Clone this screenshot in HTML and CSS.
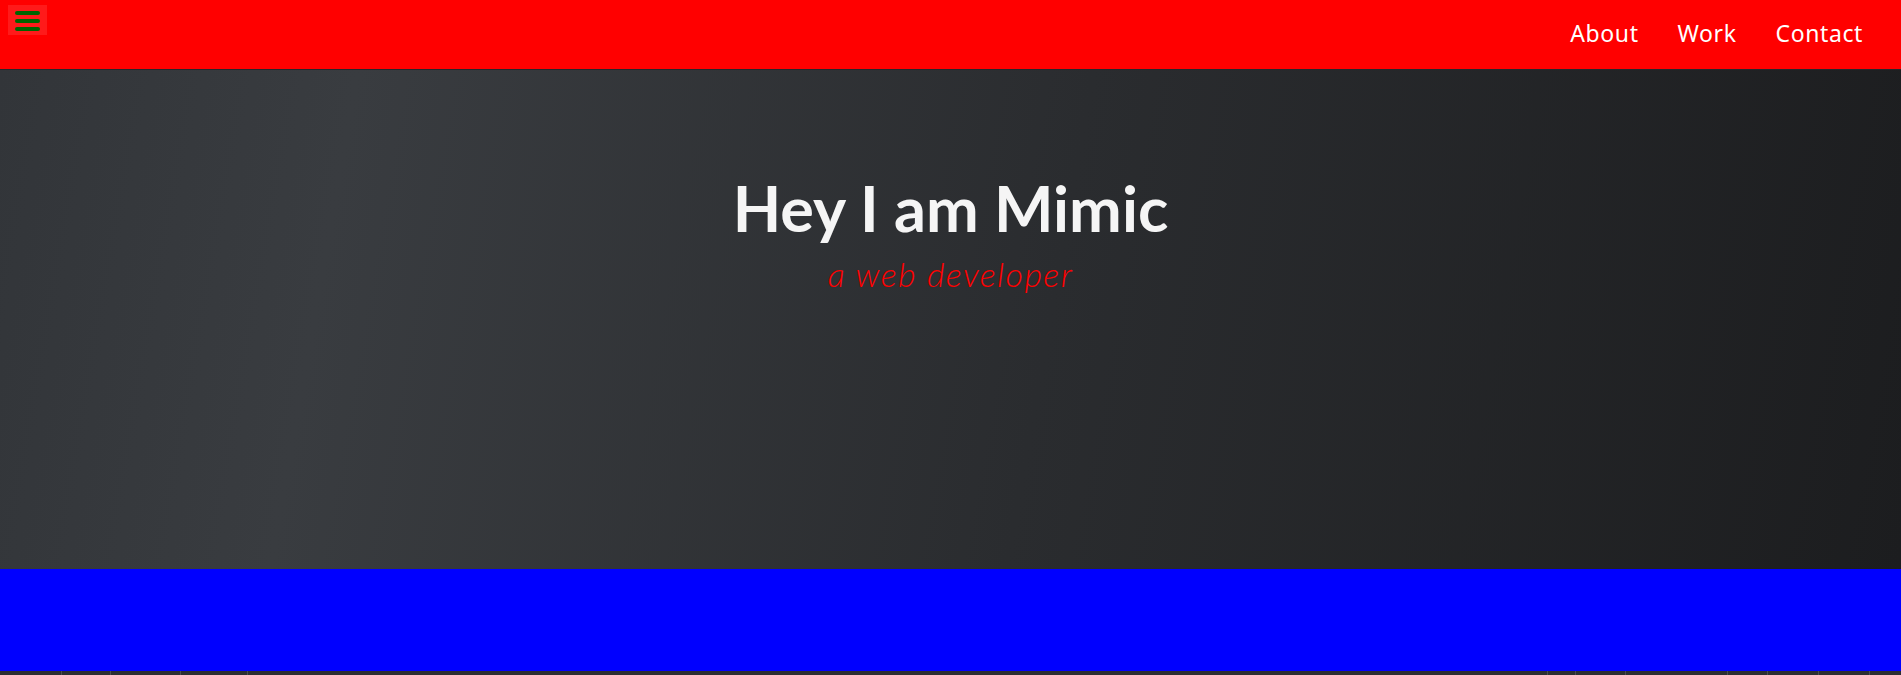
FILE: index.html
```html
<!DOCTYPE html>
<html lang="en">
<head>
<meta charset="utf-8">
<title>Mimic</title>
<link rel="stylesheet" href="styles.css">
</head>
<body>
<header class="topbar">
  <button class="menu-btn" aria-label="Menu">
    <span class="bar"></span><span class="bar"></span><span class="bar"></span>
  </button>
  <nav class="nav">
    <a href="#">About</a>
    <a href="#">Work</a>
    <a href="#">Contact</a>
  </nav>
</header>
<section class="hero">
  <h1 class="title">Hey I am Mimic</h1>
  <p class="subtitle">a web developer</p>
</section>
<section class="band"></section>
<div class="strip">
  <span class="cell w62"></span><span class="cell w49"></span><span class="cell w70"></span><span class="cell w67"></span><span class="cell grow"></span><span class="cell w28"></span><span class="cell w50"></span><span class="cell w102"></span><span class="cell w40"></span><span class="cell w51"></span><span class="cell w51"></span><span class="cell w31"></span>
</div>
</body>
</html>
```
FILE: styles.css
```css
* { box-sizing: border-box; }
html, body { margin: 0; padding: 0; }
body {
  background: #2c2e33;
  font-family: "Lato", "Noto Sans", sans-serif;
  overflow: hidden;
}
.topbar {
  height: 70px;
  background: #ff0000;
  border-bottom: 1px solid #26272b;
  display: flex;
  justify-content: space-between;
  align-items: flex-start;
}
.menu-btn {
  margin: 5px 0 0 8px;
  width: 39px;
  height: 30px;
  background: #ff1a1a;
  border: none;
  padding: 6px 0 0 7px;
  display: flex;
  flex-direction: column;
  gap: 4px;
  cursor: pointer;
}
.bar {
  display: block;
  width: 25px;
  height: 4px;
  border-radius: 2px;
  background: #006400;
}
.nav {
  display: flex;
  gap: 39px;
  padding: 17px 38px 0 0;
}
.nav a {
  color: #ffffff;
  text-decoration: none;
  font-family: "Noto Sans", "Lato", sans-serif;
  font-size: 23px;
  line-height: 32px;
  letter-spacing: 0.6px;
}
.hero {
  height: 499px;
  background: linear-gradient(100deg, #323539 0%, #393c40 18%, #2a2c2f 55%, #1c1d1f 100%);
  display: flex;
  flex-direction: column;
  align-items: center;
  padding-top: 106px;
}
.title {
  margin: 0;
  color: #f5f5f5;
  font-family: "Lato", sans-serif;
  font-weight: 700;
  font-size: 63px;
  line-height: 64px;
}
.subtitle {
  margin: 14px 0 0 0;
  color: #ff0000;
  font-family: "Lato", sans-serif;
  font-weight: 300;
  font-style: italic;
  font-size: 34px;
  line-height: 40px;
  letter-spacing: 1.4px;
}
.band {
  height: 102px;
  background: #0000ff;
}
.strip {
  height: 4px;
  display: flex;
  background: #2c2e33;
}
.cell { height: 4px; border-right: 1px solid #4a4c52; flex: none; }
.w62 { width: 62px; }
.w49 { width: 49px; }
.w70 { width: 70px; }
.w67 { width: 67px; }
.grow { flex: 1; }
.w28 { width: 28px; }
.w50 { width: 50px; }
.w102 { width: 102px; }
.w40 { width: 40px; }
.w51 { width: 51px; }
.w31 { width: 31px; border-right: none; }
```
